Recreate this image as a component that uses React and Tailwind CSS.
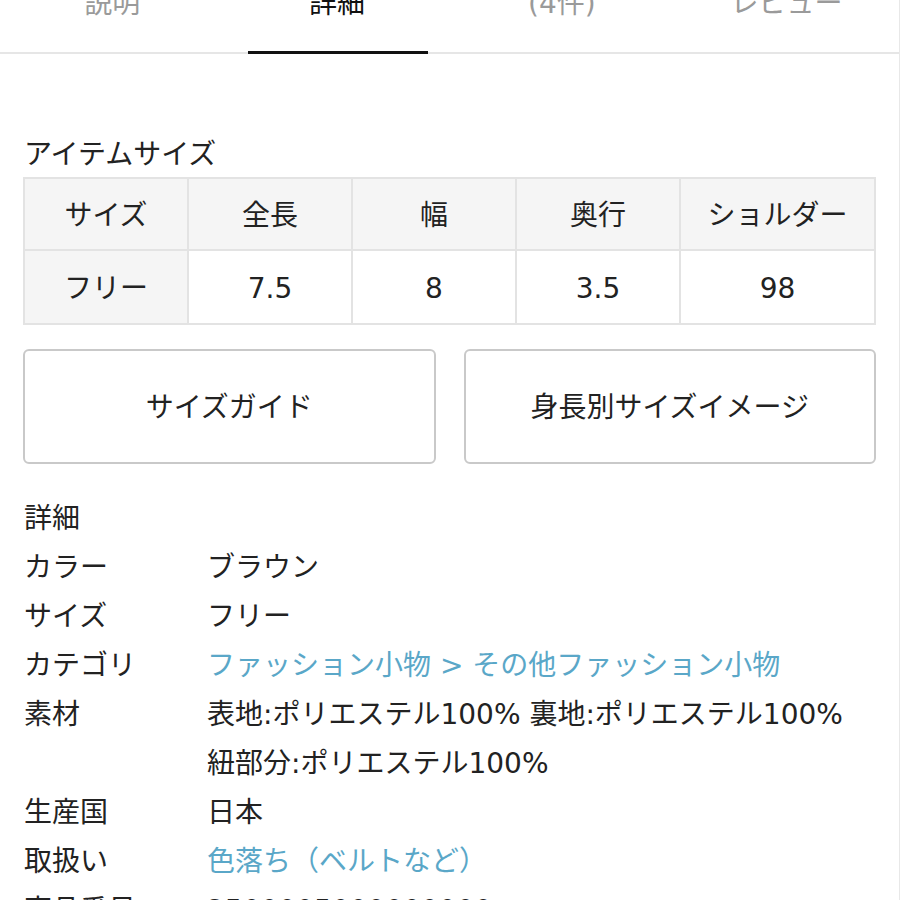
import React from "react";

const font = { fontFamily: '"DejaVu Sans", "Noto Sans CJK JP", sans-serif' };

function Tabs() {
  const tabs = ["説明", "詳細", "(4件)", "レビュー"];
  return (
    <div className="flex h-[54px] border-b-2 border-[#e6e6e6]">
      {tabs.map((t, i) => (
        <div key={t} className="relative flex-1 flex justify-center">
          <span className={`mt-[-10px] text-[28px] leading-[28px] ${i === 1 ? "text-[#111]" : "text-[#9a9a9a]"}`}>{t}</span>
          {i === 1 && <div className="absolute left-[23px] right-[22px] bottom-[-2px] h-[3px] bg-[#111]" />}
        </div>
      ))}
    </div>
  );
}

function SizeTable() {
  const head = ["サイズ", "全長", "幅", "奥行", "ショルダー"];
  const row = ["フリー", "7.5", "8", "3.5", "98"];
  const widths = ["w-[164px]", "w-[164px]", "w-[164px]", "w-[164px]", "flex-1"];
  return (
    <div className="border-2 border-[#e3e3e3] border-r-0 border-b-0">
      <div className="flex h-[72px] bg-[#f5f5f5]">
        {head.map((h, i) => (
          <div key={h} className={`${widths[i]} flex items-center justify-center pt-[3px] border-r-2 border-b-2 border-[#e3e3e3]`}>{h}</div>
        ))}
      </div>
      <div className="flex h-[74px]">
        {row.map((h, i) => (
          <div key={i} className={`${widths[i]} flex items-center justify-center pt-[3px] border-r-2 border-b-2 border-[#e3e3e3] ${i === 0 ? "bg-[#f5f5f5]" : "bg-white"}`}>{h}</div>
        ))}
      </div>
    </div>
  );
}

function Row({ label, children, link }) {
  return (
    <div className="flex">
      <div className="w-[183px] shrink-0">{label}</div>
      <div className={link ? "text-[#5aa7c8]" : ""}>{children}</div>
    </div>
  );
}

export default function App() {
  return (
    <div style={font} className="w-[900px] h-[900px] overflow-hidden bg-white text-[#222] text-[28px] border-r border-[#e8e8e8]">
      <Tabs />
      <div className="px-[23px]">
        <div className="pt-[86px] leading-[30px] pl-[1px]">アイテムサイズ</div>
        <div className="mt-[7px]">
          <SizeTable />
        </div>
        <div className="mt-[24px] flex gap-[28px]">
          <div className="flex-1 h-[115px] flex items-center justify-center pt-[2px] border-2 border-[#c9c9c9] rounded-[6px]">サイズガイド</div>
          <div className="flex-1 h-[115px] flex items-center justify-center pt-[2px] border-2 border-[#c9c9c9] rounded-[6px]">身長別サイズイメージ</div>
        </div>
        <div className="mt-[30px] leading-[49px] pl-[1px]">
          <div>詳細</div>
          <Row label="カラー">ブラウン</Row>
          <Row label="サイズ">フリー</Row>
          <Row label="カテゴリ" link>ファッション小物 &gt; その他ファッション小物</Row>
          <Row label="素材">
            <div>表地:ポリエステル100% 裏地:ポリエステル100%</div>
            <div>紐部分:ポリエステル100%</div>
          </Row>
          <Row label="生産国">日本</Row>
          <Row label="取扱い" link>色落ち（ベルトなど）</Row>
          <Row label="商品番号">2500005000000000</Row>
        </div>
      </div>
    </div>
  );
}
